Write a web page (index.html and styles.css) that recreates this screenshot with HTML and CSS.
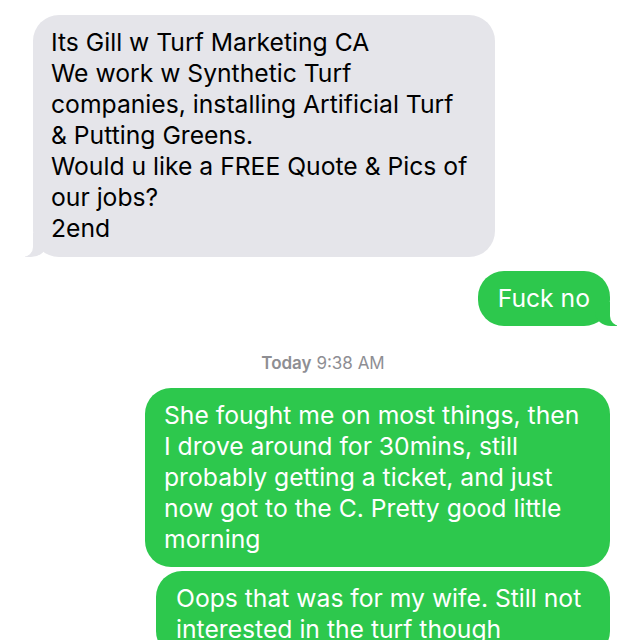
FILE: index.html
```html
<!DOCTYPE html>
<html>
<head>
<meta charset="utf-8">
<link rel="stylesheet" href="styles.css">
</head>
<body>
<div class="thread">
  <div class="bubble them tail gray-msg">Its Gill w Turf Marketing CA<br>We work w Synthetic Turf<br>companies, installing Artificial Turf<br>&amp; Putting Greens.<br>Would u like a FREE Quote &amp; Pics of<br>our jobs?<br>2end</div>
  <div class="bubble me tail short-msg">Fuck no</div>
  <div class="stamp"><b>Today</b> 9:38 AM</div>
  <div class="bubble me long-msg">She fought me on most things, then<br>I drove around for 30mins, still<br>probably getting a ticket, and just<br>now got to the C. Pretty good little<br>morning</div>
  <div class="bubble me oops-msg">Oops that was for my wife. Still not<br>interested in the turf though</div>
</div>
</body>
</html>
```
FILE: styles.css
```css
html, body {
  margin: 0;
  padding: 0;
  background: #ffffff;
  overflow: hidden;
}
body {
  width: 640px;
  height: 640px;
  font-family: Inter, "Liberation Sans", Arial, sans-serif;
}
.thread {
  display: flex;
  flex-direction: column;
  padding: 15px 30px 0 33px;
}
.bubble {
  position: relative;
  font-size: 24.7px;
  line-height: 31px;
  padding: 12px 19px;
  border-radius: 26px;
  box-sizing: border-box;
  white-space: nowrap;
}
.them {
  align-self: flex-start;
  background: #e5e5ea;
  color: #000;
}
.me {
  align-self: flex-end;
  background: #2dc84d;
  color: #fff;
}
.gray-msg {
  width: 462px;
  padding-left: 18px;
  padding-bottom: 13px;
}
.short-msg {
  margin-top: 14px;
  padding: 12px 20px;
}
.long-msg {
  width: 465px;
}
.oops-msg {
  margin-top: 4px;
  width: 454px;
  padding-left: 20px;
}
.stamp {
  align-self: center;
  margin: 27px 0 15px;
  font-size: 17px;
  line-height: 20px;
  color: #8e8e93;
  padding-left: 3px;
}
.stamp b {
  font-weight: 600;
}
.tail::before,
.tail::after {
  content: "";
  position: absolute;
  bottom: 0;
  height: 24px;
}
.them.tail::before {
  left: -8px;
  width: 22px;
  background: #e5e5ea;
  border-bottom-right-radius: 16px 14px;
}
.them.tail::after {
  left: -26px;
  width: 26px;
  background: #fff;
  border-bottom-right-radius: 10px;
}
.me.tail::before {
  right: -7px;
  width: 22px;
  background: #2dc84d;
  border-bottom-left-radius: 16px 14px;
}
.me.tail::after {
  right: -26px;
  width: 26px;
  background: #fff;
  border-bottom-left-radius: 10px;
}
```
